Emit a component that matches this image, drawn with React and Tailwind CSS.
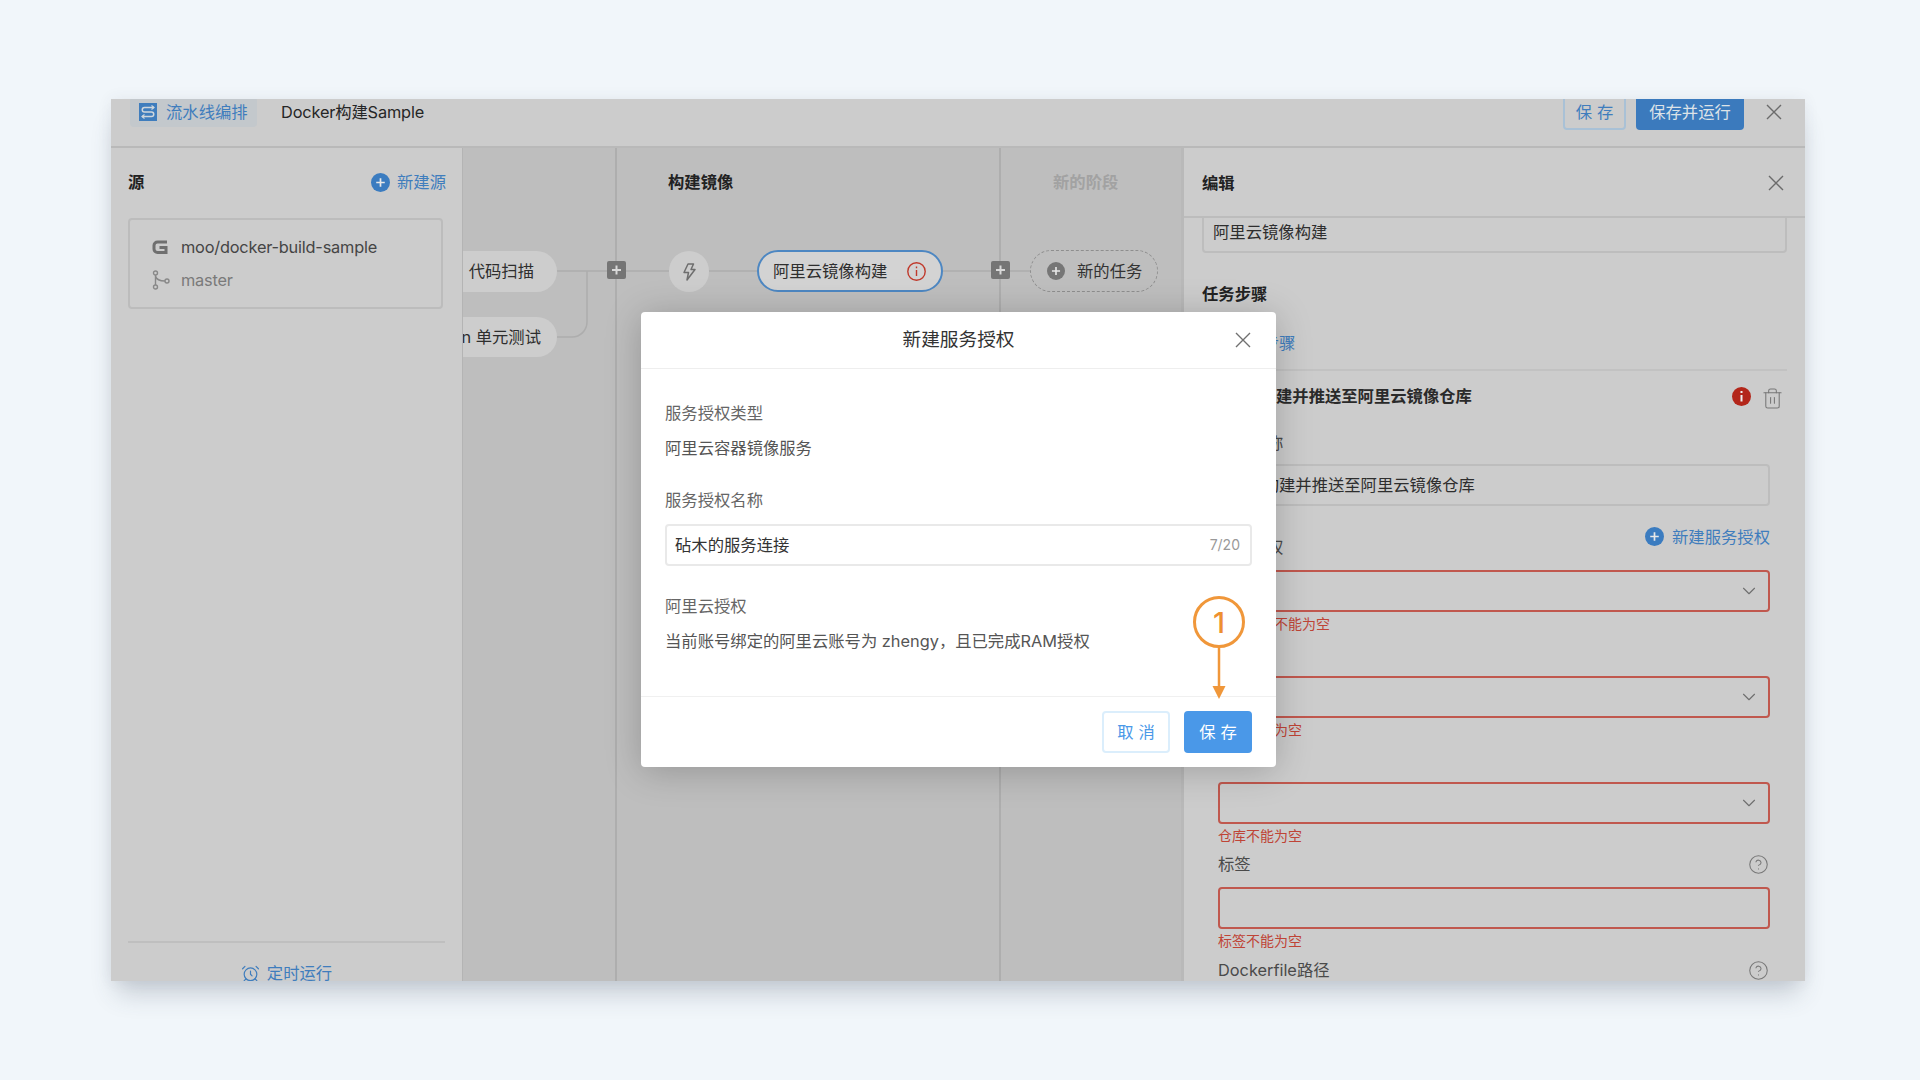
import React from 'react';
import { AlarmClock, ChevronDown, CircleHelp, Trash2 } from 'lucide-react';

const BLUE = 'text-[#3f7dbd]';

// thin close cross used in all three headers
const CloseIcon = ({ color = '#6b6b6b' }) => (
    <svg width="18" height="18" viewBox="0 0 18 18" fill="none" stroke={color} strokeWidth="1.4">
        <path d="M2 2L16 16M16 2L2 16" />
    </svg>
);

const PlusCircle = ({ size = 19, color = '#3b7cc0' }) => (
    <svg width={size} height={size} viewBox="0 0 20 20" className="shrink-0">
        <circle cx="10" cy="10" r="10" fill={color} />
        <path d="M10 5.5V14.5M5.5 10H14.5" stroke="#e8e8e8" strokeWidth="1.8" />
    </svg>
);

const PlusSquare = () => (
    <svg width="19" height="18" viewBox="0 0 19 18">
        <rect width="19" height="18" rx="2" fill="#757575" />
        <path d="M9.5 4.5V13.5M5 9H14" stroke="#d8d8d8" strokeWidth="2" />
    </svg>
);

const PipelineIcon = () => (
    <svg width="18" height="18" viewBox="0 0 18 18" className="shrink-0">
        <rect width="18" height="18" fill="#3f7dbd" />
        <path d="M15 4.5H5.5A2.2 2.2 0 0 0 5.5 9H12.5A2.2 2.2 0 0 1 12.5 13.5H3" stroke="#cfd6dc" strokeWidth="1.5" fill="none" />
        <path d="M12.5 2.5L15 4.5L12.5 6.5M5.5 11.5L3 13.5L5.5 15.5" stroke="#cfd6dc" strokeWidth="1.2" fill="none" />
    </svg>
);

const RepoIcon = () => (
    <svg width="16" height="15" viewBox="0 0 16 15" fill="none" stroke="#6f6f6f" strokeWidth="3">
        <path d="M15 2H5.5A3.5 3.5 0 0 0 2 5.5V9A3.5 3.5 0 0 0 5.5 12.5H14V7.5H7.5" />
    </svg>
);

const BranchIcon = () => (
    <svg width="18" height="20" viewBox="0 0 18 20" fill="none" stroke="#888" strokeWidth="1.4">
        <circle cx="3.5" cy="3" r="2" />
        <circle cx="3.5" cy="17" r="2" />
        <circle cx="15" cy="11" r="2" />
        <path d="M3.5 5V15M3.5 6C4.5 10 8 11 13 11" />
    </svg>
);

const BoltIcon = () => (
    <svg width="14" height="18" viewBox="0 0 14 18" fill="none" stroke="#6e6e6e" strokeWidth="1.5" strokeLinejoin="round">
        <path d="M6 1H11.5L9 6.5H13L5 17L6.5 9.5H2Z" />
    </svg>
);

const TaskInfo = () => (
    <svg width="19" height="19" viewBox="0 0 19 19" fill="none" stroke="#c0392b" strokeWidth="1.4">
        <circle cx="9.5" cy="9.5" r="8.7" />
        <path d="M9.5 8V14M9.5 4.6V6.2" />
    </svg>
);

const ErrorBadge = () => (
    <svg width="19" height="19" viewBox="0 0 19 19">
        <circle cx="9.5" cy="9.5" r="9.5" fill="#b3261a" />
        <path d="M9.5 8V14.5M9.5 4V6" stroke="#eee" strokeWidth="2" />
    </svg>
);

// one form block of the edit panel
const Field = ({ label, error, select, help, link, tight }) => (
    <div className={tight ? 'mb-[6px]' : 'mb-[7px]'}>
        <div className="flex h-6 items-center justify-between text-[#4a4a4a]">
            <span>{label}</span>
            {help && <CircleHelp size={21} strokeWidth={1.2} className="mr-[1px] text-[#777]" />}
            {link && (
                <span className={`-mt-5 flex items-center gap-2 ${BLUE}`}>
                    <PlusCircle />
                    {link}
                </span>
            )}
        </div>
        <div className="mt-[11px] flex h-[42px] items-center justify-end rounded border-2 border-[#c0584e] pr-[8px]">
            {select && <ChevronDown size={22} strokeWidth={1.2} className="text-[#6f6f6f]" />}
        </div>
        {error && <div className="mt-0.5 h-5 text-[14px] leading-5 text-[#bf4436]">{error}</div>}
    </div>
);

const Sidebar = () => (
    <aside className="flex h-full w-[352px] shrink-0 flex-col overflow-hidden border-r border-[#b4b4b4] pt-[22px]">
        <div className="flex h-6 items-center justify-between pl-[17px] pr-[16px]">
            <span className="font-bold text-[#222]">源</span>
            <span className={`flex items-center gap-[7px] ${BLUE}`}>
                <PlusCircle />
                新建源
            </span>
        </div>
        <div className="ml-[17px] mt-6 h-[91px] w-[315px] rounded border-2 border-[#bcbcbc] pl-[22px] pt-[15px]">
            <div className="flex h-6 items-center gap-[13px] tracking-[-0.2px] text-[#454545]">
                <RepoIcon />
                moo/docker-build-sample
            </div>
            <div className="mt-[9px] flex h-6 items-center gap-[11px] tracking-[-0.2px] text-[#7a7a7a]">
                <BranchIcon />
                master
            </div>
        </div>
        <div className="mx-[17px] mt-auto h-10 shrink-0 border-t-2 border-[#bfbfbf] pt-[18px]">
            <div className={`flex h-6 items-center justify-center gap-[7px] ${BLUE}`}>
                <AlarmClock size={19} strokeWidth={1.5} />
                定时运行
            </div>
        </div>
    </aside>
);

const Canvas = () => (
    <main className="relative flex h-full w-[718px] shrink-0 overflow-hidden bg-[#bebebe]">
        <div className="h-full w-[154px] border-r-2 border-[#aeaeae]" />
        <div className="h-full w-[384px] border-r-2 border-[#aeaeae] pl-[51px] pt-[22px] font-bold leading-6 text-[#222]">构建镜像</div>
        <div className="h-full flex-1 pl-[52px] pt-[22px] font-bold leading-6 text-[#a2a2a2]">新的阶段</div>

        {/* pipeline diagram */}
        <svg className="absolute left-0 top-0" width="718" height="300" fill="none" stroke="#adadad" strokeWidth="1.5">
            <path d="M94 123H144M162 123H206M246 123H294M480 123H528M547 123H567" />
            <path d="M94 189H109A15 15 0 0 0 124 174V123" />
        </svg>
        <div className="absolute -left-10 top-[103px] flex h-[41px] w-[134px] items-center justify-end rounded-full bg-[#cdcdcd] pr-[23px] text-[#2e2e2e]">代码扫描</div>
        <div className="absolute -left-14 top-[169px] flex h-10 w-[150px] items-center justify-end whitespace-nowrap rounded-full bg-[#cdcdcd] pr-[16px] text-[#2e2e2e]">Maven 单元测试</div>
        <div className="absolute left-[144px] top-[113px] flex"><PlusSquare /></div>
        <div className="absolute left-[206px] top-[103px] flex h-[41px] w-10 items-center justify-center rounded-full bg-[#cdcdcd]">
            <BoltIcon />
        </div>
        <div className="absolute left-[294px] top-[102px] flex h-[42px] w-[186px] items-center justify-between rounded-full border-2 border-[#4d87c2] bg-[#d3d3d3] pl-[14px] pr-[15px] text-[#2e2e2e]">
            阿里云镜像构建
            <TaskInfo />
        </div>
        <div className="absolute left-[528px] top-[113px] flex"><PlusSquare /></div>
        <div className="absolute left-[567px] top-[102px] flex h-[42px] w-[128px] items-center gap-3 rounded-full border border-dashed border-[#8e8e8e] bg-[#bebebe] pl-[16px] text-[#333]">
            <PlusCircle size={18} color="#767676" />
            新的任务
        </div>
    </main>
);

const EditPanel = () => (
    <section className="flex h-full flex-1 flex-col overflow-hidden border-l-[3px] border-[#b9b9b9] bg-[#cccccc]">
        <div className="flex h-[70px] shrink-0 items-center justify-between border-b-2 border-[#bcbcbc] pl-[18px] pr-[20px] pt-[2px]">
            <span className="font-bold text-[#222]">编辑</span>
            <CloseIcon />
        </div>
        <div className="flex-1 overflow-hidden pl-[18px] pr-[18px]">
            <div className="-mt-[7px] flex h-[42px] items-center rounded border-2 border-[#bdbdbd] pl-[9px] text-[#2e2e2e]">阿里云镜像构建</div>
            <div className="mt-[29px] h-6 font-bold leading-6 text-[#222]">任务步骤</div>
            <div className={`mt-[25px] flex h-6 items-center gap-2 ${BLUE}`}>
                <span className="pl-[1px]"><PlusCircle size={19} /></span>
                <span>添加步骤</span>
            </div>
            <div className="mt-[14px] border-t-2 border-[#c2c2c2]" />
            <div className="mt-[13px] flex h-6 items-center justify-between pl-[25px] pr-[3px]">
                <span className="font-bold text-[#2a2a2a]">镜像构建并推送至阿里云镜像仓库</span>
                <span className="flex items-center gap-[10px]">
                    <ErrorBadge />
                    <Trash2 size={23} strokeWidth={1.1} className="mt-1 text-[#777]" />
                </span>
            </div>
            <div className="ml-[16px] mr-[17px] mt-[23px]">
                <div className="mb-[29px]">
                    <div className="h-6 leading-6 text-[#4a4a4a]">步骤名称</div>
                    <div className="mt-[9px] flex h-[42px] items-center rounded border-2 border-[#bdbdbd] pl-[10px] text-[#2e2e2e]">镜像构建并推送至阿里云镜像仓库</div>
                </div>
                <Field label="服务授权" link="新建服务授权" select error="服务授权不能为空" />
                <Field label="地域" select error="地域不能为空" />
                <Field label="仓库" select tight error="仓库不能为空" />
                <Field label="标签" help error="标签不能为空" />
                <div className="flex h-6 items-center justify-between text-[#4a4a4a]">
                    Dockerfile路径
                    <CircleHelp size={21} strokeWidth={1.2} className="mr-[1px] text-[#777]" />
                </div>
            </div>
        </div>
    </section>
);

const AuthModal = () => (
    <div className="absolute left-[530px] top-[213px] flex h-[455px] w-[635px] flex-col rounded bg-white shadow-[0_4px_36px_rgba(0,0,0,0.22)]">
        <div className="relative flex h-[57px] shrink-0 items-center justify-center border-b border-[#eeeeee] text-[18.67px] text-[#333]">
            新建服务授权
            <span className="absolute right-[24px] top-[19px] flex"><CloseIcon color="#707070" /></span>
        </div>
        <div className="flex-1 px-6 pt-[32px] leading-6">
            <div className="h-6 text-[#666]">服务授权类型</div>
            <div className="mt-[11px] h-6 text-[#555]">阿里云容器镜像服务</div>
            <div className="mt-[28px] h-6 text-[#666]">服务授权名称</div>
            <div className="mt-[12px] flex h-[42px] items-center justify-between rounded border-2 border-[#e9e9e9] pl-[8px] pr-[10px] text-[#333]">
                砧木的服务连接
                <span className="text-[14px] text-[#999]">7/20</span>
            </div>
            <div className="mt-[28px] h-6 text-[#666]">阿里云授权</div>
            <div className="mt-[11px] h-6 text-[#555]">当前账号绑定的阿里云账号为 zhengy，且已完成RAM授权</div>
        </div>
        <div className="flex h-[71px] shrink-0 justify-end gap-[14px] border-t border-[#f0f0f0] pr-6 pt-[14px]">
            <button className="h-[42px] w-[68px] rounded border-2 border-[#dbeefc] pl-[5px] tracking-[5px] text-[#4a98e8]">取消</button>
            <button className="h-[42px] w-[68px] rounded bg-[#4a98e8] pl-[5px] tracking-[5px] text-white">保存</button>
        </div>

        {/* tutorial annotation on top of the dialog */}
        <div className="absolute left-[552px] top-[284px] flex w-[52px] flex-col items-center">
            <div className="flex h-[52px] w-[52px] items-center justify-center rounded-full border-[3px] border-[#f0973a] text-[29px] font-medium leading-none text-[#ee9030]">1</div>
            <svg width="14" height="51" viewBox="0 0 14 51">
                <path d="M7 0V40" stroke="#f0973a" strokeWidth="2.5" />
                <path d="M0.5 38H13.5L7 51Z" fill="#f0973a" />
            </svg>
        </div>
    </div>
);

export default function App() {
    return (
        <div className="h-[1080px] w-full overflow-hidden bg-[#f1f6fa] pl-[111px] pt-[99px] text-[16.33px] font-['Inter','Noto_Sans_CJK_SC',sans-serif]">
            <div className="relative h-[882px] w-[1694px] bg-[#cccccc] shadow-[0_18px_24px_-6px_rgba(60,70,90,0.24),0_0_14px_rgba(60,70,90,0.08)]">
                <div className="relative flex h-full flex-col overflow-hidden">
                    <header className="flex h-[49px] shrink-0 items-end justify-between border-b-2 border-[#b9b9b9] pb-[16px] pl-[19px] pr-[22px]">
                        <div className="flex h-9 items-center">
                            <div className={`flex h-[30px] w-[127px] items-center gap-[9px] rounded bg-[#c3c8cc] pl-[9px] ${BLUE}`}>
                                <PipelineIcon />
                                流水线编排
                            </div>
                            <div className="ml-6 tracking-[-0.15px] text-[#262626]">Docker构建Sample</div>
                        </div>
                        <div className="flex h-9 items-center gap-[10px]">
                            <button className={`h-9 w-[63px] rounded border-2 border-[#a9c1d6] pl-[5px] tracking-[5px] ${BLUE}`}>保存</button>
                            <button className="h-9 w-[108px] rounded bg-[#3b7abd] text-[#dde3e8]">保存并运行</button>
                            <span className="ml-[11px] flex"><CloseIcon /></span>
                        </div>
                    </header>
                    <div className="flex min-h-0 flex-1">
                        <Sidebar />
                        <Canvas />
                        <EditPanel />
                    </div>
                    <AuthModal />
                </div>
            </div>
        </div>
    );
}
